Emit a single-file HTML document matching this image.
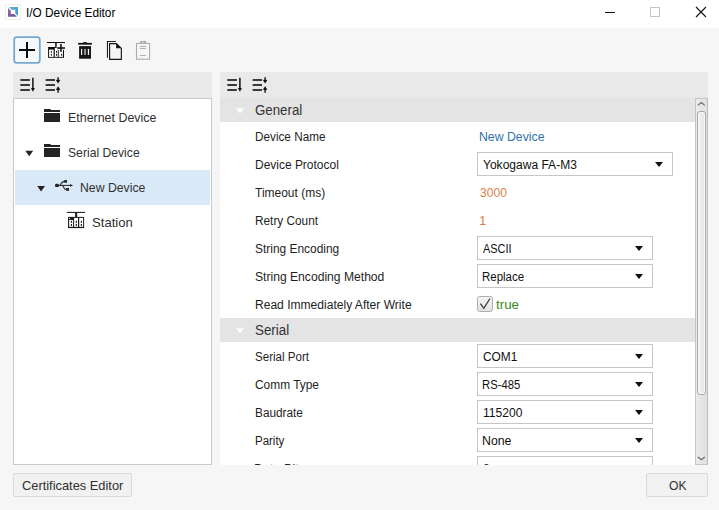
<!DOCTYPE html>
<html><head><meta charset="utf-8"><title>I/O Device Editor</title>
<style>
html,body{margin:0;padding:0}
body{width:719px;height:510px;overflow:hidden;background:#f6f6f6;position:relative;font-family:'Liberation Sans', sans-serif}
div,span,svg{position:absolute;box-sizing:border-box}
.t{white-space:pre;line-height:1;transform-origin:0 0}
.cb{height:24px;box-sizing:border-box;border:1px solid #c6c6c6;background:#fff;width:0;box-sizing:content-box;height:22px}
.ar{width:0;height:0;border-left:4.5px solid transparent;border-right:4.5px solid transparent;border-top:5px solid #111}
.btn{border:1px solid #dadada;background:#f1f1f1;border-radius:2px}
</style></head><body>
<!-- title bar -->
<div style="left:0;top:0;width:719px;height:28px;background:#fff"></div>
<svg style="left:5px;top:4px" width="16" height="16" viewBox="0 0 16 16">
 <rect x="0.5" y="0.5" width="15" height="15" fill="#fff" stroke="#ededed"/>
 <defs><linearGradient id="gb" x1="0" y1="0" x2="1" y2="1"><stop offset="0" stop-color="#6ab0cc"/><stop offset="1" stop-color="#3a97dc"/></linearGradient>
 <linearGradient id="gp" x1="0" y1="0" x2="1" y2="1"><stop offset="0" stop-color="#8a72b2"/><stop offset="1" stop-color="#6c4f94"/></linearGradient></defs>
 <path d="M3.9 3 H13 V12.1 L10.3 9.4 V5.8 H6.7 Z" fill="url(#gb)"/>
 <path d="M3 3.9 L5.8 6.7 V10 H9.2 L11.9 12.7 H3 Z" fill="url(#gp)"/>
</svg>
<svg style="left:600px;top:0" width="119" height="28" viewBox="0 0 119 28">
 <rect x="5" y="12" width="10" height="1" fill="#111"/>
 <rect x="50.5" y="7.5" width="9" height="9" fill="none" stroke="#c4c4c4"/>
 <path d="M96 7 L106 17 M106 7 L96 17" stroke="#111" stroke-width="1.1" fill="none"/>
</svg>

<!-- toolbar -->
<svg style="left:12px;top:35px" width="30" height="30" viewBox="0 0 30 30"><rect x="2.2" y="2.2" width="25.6" height="25.6" rx="2.6" fill="#f6f9fb" stroke="#76a9cf" stroke-width="1.8"/></svg>
<svg style="left:13px;top:36px" width="150" height="28" viewBox="0 0 150 28">
 <!-- plus -->
 <path d="M14 6 V22 M6 14 H22" stroke="#0c0c0c" stroke-width="2" fill="none"/>
 <!-- station add -->
 <g fill="#0e0e0e">
  <rect x="34" y="6" width="18" height="1"/>
  <rect x="42.2" y="7" width="1.5" height="4.4"/>
  <rect x="35.1" y="11" width="15.9" height="10.8"/>
 </g>
 <g fill="#fdfdfd">
  <rect x="36.1" y="13.6" width="4.5" height="7.3"/>
  <rect x="41.8" y="11.9" width="3" height="9"/>
  <rect x="45.7" y="11.9" width="4.2" height="9"/>
 </g>
 <g fill="#f9f9f9">
  <rect x="43.7" y="10.3" width="8.8" height="3.5"/>
  <rect x="46.3" y="7.2" width="3.3" height="9.5"/>
 </g>
 <g fill="#0e0e0e">
  <rect x="37.9" y="15" width="1" height="1.7"/><rect x="37.9" y="17.9" width="1" height="1.8"/>
  <rect x="43" y="15" width="1" height="1.7"/><rect x="43" y="17.9" width="1" height="1.8"/>
  <rect x="48.1" y="17.9" width="1" height="1.8"/>
  <rect x="47.2" y="7.9" width="1.55" height="7.9"/>
  <rect x="44.2" y="11.25" width="7.8" height="1.55"/>
 </g>
 <!-- trash -->
 <g fill="#151515">
  <rect x="65.1" y="6.9" width="13.8" height="1.8"/>
  <rect x="70.1" y="6.1" width="3.8" height="1.2"/>
  <rect x="66.1" y="10.1" width="11.9" height="12.6"/>
 </g>
 <g fill="#f8f8f8">
  <rect x="68" y="12.9" width="1.2" height="6"/><rect x="71.2" y="12.9" width="1.6" height="6" fill="#b5b5b5"/><rect x="74.8" y="12.9" width="1.3" height="6"/>
 </g>
 <!-- copy -->
 <path d="M94.45 21.8 V5.55 H102.9" stroke="#1a1a1a" stroke-width="1.05" fill="none"/>
 <path d="M96.6 7.6 H103.4 L108.35 12.4 V23.4 H96.6 Z" stroke="#151515" stroke-width="1.15" fill="none"/>
 <path d="M103.1 7.3 L108.6 12.3 H103.1 Z" fill="#151515"/>
 <!-- paste -->
 <g stroke="#adadad" fill="none" stroke-width="1.1">
  <rect x="123.5" y="7.4" width="13.1" height="15.8"/>
  <path d="M126.9 10.45 H133.1 M126.9 12.45 H133.1 M126.9 19.5 H133.1" stroke-width="0.95"/>
 </g>
 <rect x="127.2" y="5.1" width="5.9" height="2.2" fill="#a4a4a4"/><rect x="129" y="5.9" width="2.3" height="0.9" fill="#eee"/>
</svg>

<!-- left panel -->
<div style="left:13px;top:72px;width:199px;height:26px;background:#e9e9e9"></div>
<div style="left:13px;top:98px;width:199px;height:367px;background:#fff;border:1px solid #c9c9c9"></div>
<div style="left:15px;top:170px;width:195px;height:35px;background:#d9e9f8"></div>

<svg class="si" style="left:14px;top:76px" width="52" height="18" viewBox="0 0 52 18">
 <g fill="#111">
  <rect x="6.3" y="3.2" width="9.6" height="1.6"/><rect x="6.3" y="8.2" width="9.6" height="1.6"/><rect x="6.3" y="13.2" width="9.6" height="1.6"/>
  <rect x="18.15" y="1.8" width="1.5" height="11.5"/><path d="M16.9 12 L20.9 12 L18.9 15.8 Z"/>
  <rect x="31.6" y="3.2" width="9.4" height="1.6"/><rect x="31.6" y="8.2" width="9.4" height="1.6"/><rect x="31.6" y="13.2" width="9.4" height="1.6"/>
  <path d="M43.4 1.3 H44.8 V3.7 L46.3 3.9 L44.1 7.4 L41.9 3.9 L43.4 3.7 Z"/>
  <path d="M43.4 16.7 H44.8 V13.9 L46.3 13.7 L44.1 10.2 L41.9 13.7 L43.4 13.9 Z"/>
 </g>
</svg>
<svg style="left:14px;top:98px" width="198" height="140" viewBox="0 0 198 140">
 <!-- folders -->
 <g fill="#242424">
  <path d="M30 11 H36.3 L37.2 12 H46 V14 H30 Z"/><rect x="30" y="15" width="16" height="9"/>
  <path d="M30 46 H36.3 L37.2 47 H46 V49 H30 Z"/><rect x="30" y="50" width="16" height="9"/>
  <!-- arrows -->
  <path d="M11.3 52.8 H19.2 L15.25 58.2 Z"/>
  <path d="M23.2 88 H31 L27.1 93.4 Z"/>
 </g>
 <!-- usb -->
 <g stroke="#262626" stroke-width="1.05" fill="none">
  <path d="M44 87.4 H57"/>
  <path d="M46.3 87.4 Q47.8 83.6 49.6 83.6 H51"/>
  <path d="M48.6 87.4 L50.8 91.2 H52.5"/>
 </g>
 <g fill="#262626">
  <rect x="41.1" y="85.7" width="3.8" height="3.4" rx="1.2"/>
  <rect x="50.3" y="82" width="2.7" height="2.7"/>
  <rect x="52.1" y="90" width="2.9" height="2.8"/>
  <path d="M56.1 86 L59.1 87.4 L56.1 88.8 Z"/>
 </g>
 <!-- station -->
 <g fill="#1c1c1c">
  <rect x="52.9" y="113.9" width="18.1" height="1.05"/>
  <rect x="61.1" y="114.5" width="2.1" height="4.8"/>
  <rect x="54" y="118.9" width="16.1" height="11.2"/>
 </g>
 <g fill="#fff">
  <rect x="55.1" y="122" width="4" height="6.8"/><rect x="60.1" y="119.9" width="3.9" height="8.9"/><rect x="65.2" y="119.9" width="3.9" height="8.9"/>
  <rect x="55.1" y="120" width="1" height="1"/>
 </g>
 <g fill="#1c1c1c">
  <rect x="56.8" y="122.9" width="1.2" height="1.9"/><rect x="56.8" y="126" width="1.2" height="1.9"/>
  <rect x="61.75" y="122.9" width="1.2" height="1.9"/><rect x="61.75" y="126" width="1.2" height="1.9"/>
  <rect x="66.8" y="122.9" width="1.2" height="1.9"/><rect x="66.8" y="126" width="1.2" height="1.9"/>
 </g>
</svg>

<!-- right panel -->
<div style="left:220px;top:72px;width:488px;height:26px;background:#e9e9e9"></div>
<div style="left:220px;top:98px;width:475px;height:367px;background:#fff"></div>
<div style="left:220px;top:98px;width:475px;height:24px;background:#e4e4e4"></div>
<div style="left:220px;top:318px;width:475px;height:24px;background:#e4e4e4"></div>

<svg class="si" style="left:220.7px;top:76px" width="52" height="18" viewBox="0 0 52 18">
 <g fill="#111">
  <rect x="6.3" y="3.2" width="9.6" height="1.6"/><rect x="6.3" y="8.2" width="9.6" height="1.6"/><rect x="6.3" y="13.2" width="9.6" height="1.6"/>
  <rect x="18.15" y="1.8" width="1.5" height="11.5"/><path d="M16.9 12 L20.9 12 L18.9 15.8 Z"/>
  <rect x="31.6" y="3.2" width="9.4" height="1.6"/><rect x="31.6" y="8.2" width="9.4" height="1.6"/><rect x="31.6" y="13.2" width="9.4" height="1.6"/>
  <path d="M43.4 1.3 H44.8 V3.7 L46.3 3.9 L44.1 7.4 L41.9 3.9 L43.4 3.7 Z"/>
  <path d="M43.4 16.7 H44.8 V13.9 L46.3 13.7 L44.1 10.2 L41.9 13.7 L43.4 13.9 Z"/>
 </g>
</svg>
<svg style="left:220px;top:98px" width="40" height="250" viewBox="0 0 40 250">
 <path d="M16 10.2 H24 L20 15.4 Z" fill="#fff"/>
 <path d="M16 230.2 H24 L20 235.4 Z" fill="#fff"/>
</svg>
<div class="cb" style="left:477px;top:152px;width:194px"></div><div class="ar" style="left:655px;top:162px"></div>
<div class="cb" style="left:477px;top:236px;width:174px"></div><div class="ar" style="left:635px;top:246px"></div>
<div class="cb" style="left:477px;top:264px;width:174px"></div><div class="ar" style="left:635px;top:274px"></div>
<div class="cb" style="left:477px;top:344px;width:174px"></div><div class="ar" style="left:635px;top:354px"></div>
<div class="cb" style="left:477px;top:372px;width:174px"></div><div class="ar" style="left:635px;top:382px"></div>
<div class="cb" style="left:477px;top:400px;width:174px"></div><div class="ar" style="left:635px;top:410px"></div>
<div class="cb" style="left:477px;top:428px;width:174px"></div><div class="ar" style="left:635px;top:438px"></div>
<div style="left:220px;top:98px;width:475px;height:367px;overflow:hidden">
 <div class="cb" style="left:257px;top:358px;width:174px"></div>
 <div style="left:-220px;top:-98px;width:719px;height:510px">
 <span class="t" style="left:254.45px;top:463.34px;font-size:12px;color:#1e1e1e;transform:scaleX(1.0476)">Data Bits</span>
<span class="t" style="left:483.20px;top:463.34px;font-size:12px;color:#101010;transform:scaleX(1.0087)">8</span>
 </div>
</div>
<!-- checkbox -->
<div style="left:477px;top:296px;width:16px;height:16px;border:1px solid #adadad;border-radius:2.5px;background:linear-gradient(#f6f6f6,#e2e2e2)"></div>
<svg style="left:477px;top:296px" width="16" height="16" viewBox="0 0 16 16"><path d="M3.4 7.7 L6.8 12.4 L13 2.5" stroke="#404040" stroke-width="1.35" fill="none"/></svg>

<!-- scrollbar -->
<div style="left:695px;top:98px;width:13px;height:367px;background:linear-gradient(90deg,#ebebeb,#e0e0e0);border:1px solid #c6c6c6;border-right-color:#bcbcbc"></div>
<div style="left:697px;top:111px;width:9px;height:284px;border:1px solid #a9a9a9;border-radius:3px;background:linear-gradient(90deg,#f1f1f1,#e6e6e6);box-shadow:inset 0 0 0 1px #f8f8f8"></div>
<svg style="left:695px;top:98px" width="13" height="366" viewBox="0 0 13 366">
 <path d="M2.8 7.4 L6.3 4.6 L9.8 7.4" stroke="#666" stroke-width="1.15" fill="none"/>
 <path d="M2.8 359 L6.3 361.8 L9.8 359" stroke="#666" stroke-width="1.15" fill="none"/>
</svg>

<!-- buttons -->
<div class="btn" style="left:13px;top:473px;width:119px;height:24px"></div>
<div class="btn" style="left:646px;top:473px;width:62px;height:24px"></div>

<span class="t" style="left:25.50px;top:6.79px;font-size:12.3px;color:#000;transform:scaleX(0.9617)">I/O Device Editor</span>
<span class="t" style="left:67.88px;top:111.67px;font-size:12.2px;color:#303030;transform:scaleX(1.0194)">Ethernet Device</span>
<span class="t" style="left:68.40px;top:146.67px;font-size:12.2px;color:#303030;transform:scaleX(0.9979)">Serial Device</span>
<span class="t" style="left:80.00px;top:181.67px;font-size:12.2px;color:#303030;transform:scaleX(1.0047)">New Device</span>
<span class="t" style="left:91.96px;top:216.67px;font-size:12.2px;color:#303030;transform:scaleX(1.0748)">Station</span>
<span class="t" style="left:254.79px;top:102.95px;font-size:14px;color:#333;transform:scaleX(0.9479)">General</span>
<span class="t" style="left:254.52px;top:131.34px;font-size:12px;color:#1e1e1e;transform:scaleX(0.9787)">Device Name</span>
<span class="t" style="left:254.50px;top:159.34px;font-size:12px;color:#1e1e1e;transform:scaleX(0.9970)">Device Protocol</span>
<span class="t" style="left:255.05px;top:187.34px;font-size:12px;color:#1e1e1e;transform:scaleX(0.9993)">Timeout (ms)</span>
<span class="t" style="left:254.52px;top:215.34px;font-size:12px;color:#1e1e1e;transform:scaleX(0.9841)">Retry Count</span>
<span class="t" style="left:254.50px;top:243.34px;font-size:12px;color:#1e1e1e;transform:scaleX(0.9940)">String Encoding</span>
<span class="t" style="left:254.50px;top:271.34px;font-size:12px;color:#1e1e1e;transform:scaleX(1.0099)">String Encoding Method</span>
<span class="t" style="left:254.50px;top:299.34px;font-size:12px;color:#1e1e1e;transform:scaleX(1.0049)">Read Immediately After Write</span>
<span class="t" style="left:254.78px;top:322.95px;font-size:14px;color:#333;transform:scaleX(0.9559)">Serial</span>
<span class="t" style="left:254.52px;top:351.34px;font-size:12px;color:#1e1e1e;transform:scaleX(0.9640)">Serial Port</span>
<span class="t" style="left:254.50px;top:379.34px;font-size:12px;color:#1e1e1e;transform:scaleX(0.9921)">Comm Type</span>
<span class="t" style="left:254.52px;top:407.34px;font-size:12px;color:#1e1e1e;transform:scaleX(0.9841)">Baudrate</span>
<span class="t" style="left:254.54px;top:435.34px;font-size:12px;color:#1e1e1e;transform:scaleX(0.9559)">Parity</span>
<span class="t" style="left:479.48px;top:131.34px;font-size:12px;color:#2d72ab;transform:scaleX(1.0240)">New Device</span>
<span class="t" style="left:482.75px;top:159.34px;font-size:12px;color:#101010;transform:scaleX(1.0027)">Yokogawa FA-M3</span>
<span class="t" style="left:479.50px;top:187.34px;font-size:12px;color:#d9824a;transform:scaleX(1.0097)">3000</span>
<span class="t" style="left:479.40px;top:215.34px;font-size:12px;color:#d9824a;transform:scaleX(1.1000)">1</span>
<span class="t" style="left:483.00px;top:243.34px;font-size:12px;color:#101010;transform:scaleX(0.9091)">ASCII</span>
<span class="t" style="left:482.24px;top:271.34px;font-size:12px;color:#101010;transform:scaleX(0.9553)">Replace</span>
<span class="t" style="left:496.02px;top:299.34px;font-size:12px;color:#3a8a1a;transform:scaleX(1.1100)">true</span>
<span class="t" style="left:482.50px;top:351.34px;font-size:12px;color:#101010;transform:scaleX(0.9910)">COM1</span>
<span class="t" style="left:482.26px;top:379.34px;font-size:12px;color:#101010;transform:scaleX(0.9376)">RS-485</span>
<span class="t" style="left:482.69px;top:407.34px;font-size:12px;color:#101010;transform:scaleX(1.0066)">115200</span>
<span class="t" style="left:482.17px;top:435.34px;font-size:12px;color:#101010;transform:scaleX(1.0275)">None</span>
<span class="t" style="left:21.75px;top:480.16px;font-size:12.8px;color:#303030;transform:scaleX(1.0030)">Certificates Editor</span>
<span class="t" style="left:668.82px;top:479.62px;font-size:12.5px;color:#303030;transform:scaleX(0.9681)">OK</span>
</body></html>
